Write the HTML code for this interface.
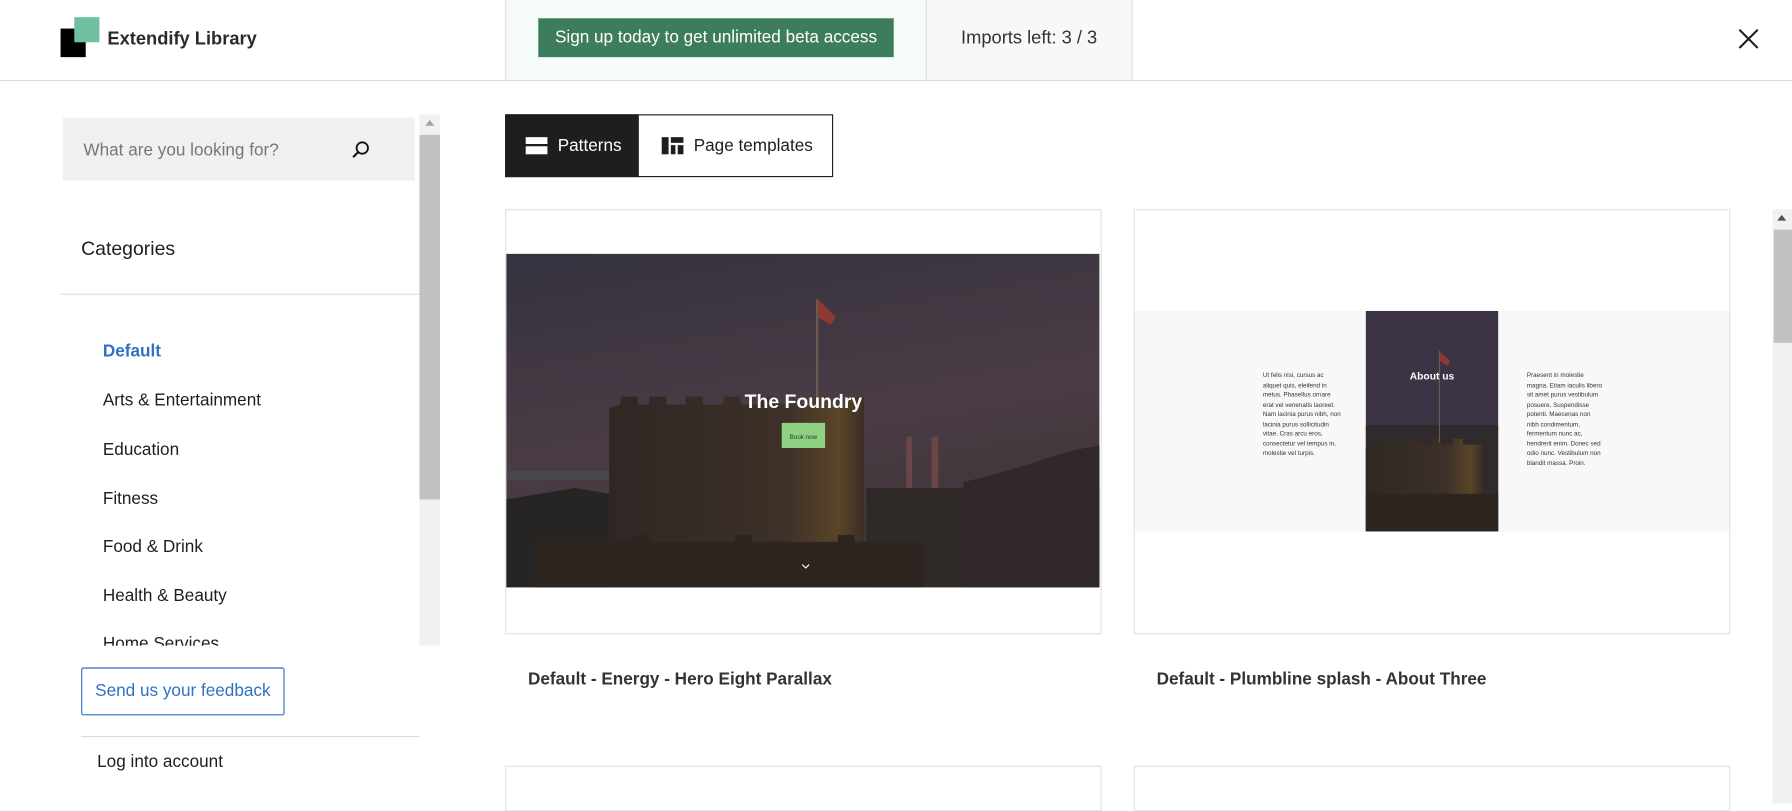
<!DOCTYPE html>
<html><head><meta charset="utf-8"><style>
*{box-sizing:border-box;margin:0;padding:0}
html,body{width:1792px;height:803px;overflow:hidden;background:#fff}
#w{position:absolute;left:0;top:0;width:1568px;height:703px;transform:scale(1.142857);transform-origin:0 0;font-family:"Liberation Sans",sans-serif;color:#1e1e1e}
.a{position:absolute}
.t{white-space:nowrap}
</style></head><body><div id="w">
<!-- header -->
<div class="a" style="left:0;top:0;width:1568px;height:71px;border-bottom:1px solid #dcdcdc"></div>
<div class="a" style="left:53px;top:25px;width:22px;height:25px;background:#000"></div>
<div class="a" style="left:65px;top:15px;width:22px;height:22px;background:#6fc1a0"></div>
<div class="a t" style="left:94px;top:26px;font-size:16px;font-weight:bold;color:#2a2a2a">Extendify Library</div>
<div class="a" style="left:442px;top:0;width:368px;height:70px;background:#f5fbf9;border-left:1px solid #dcdcdc"></div>
<div class="a t" style="left:471px;top:16px;width:311px;height:34px;background:#3d7d5d;color:#fff;font-size:15px;line-height:34px;text-align:center">Sign up today to get unlimited beta access</div>
<div class="a t" style="left:810px;top:0;width:181px;height:70px;background:#f8f8f8;border-left:1px solid #dcdcdc;border-right:1px solid #dcdcdc;font-size:16px;line-height:68px;text-align:center;color:#333">Imports left: 3 / 3</div>
<svg class="a" style="left:1520px;top:24px" width="20" height="20" viewBox="0 0 20 20"><path d="M2 2L18 18M18 2L2 18" stroke="#1e1e1e" stroke-width="1.8"/></svg>
<!-- sidebar -->
<div class="a" style="left:55px;top:103px;width:308px;height:55px;background:#f0f0f0"></div>
<div class="a t" style="left:73px;top:123px;font-size:15px;color:#777">What are you looking for?</div>
<svg class="a" style="left:307px;top:122px" width="18" height="18" viewBox="0 0 18 18"><circle cx="10" cy="7.5" r="5" fill="none" stroke="#111" stroke-width="1.6"/><path d="M6.5 11L2 15.5" stroke="#111" stroke-width="1.8"/></svg>
<div class="a" style="left:367px;top:100px;width:18px;height:465px;background:#f1f1f1"></div>
<div class="a" style="left:367px;top:118px;width:18px;height:319px;background:#c1c1c1"></div>
<div class="a" style="left:372px;top:105px;width:0;height:0;border-left:4px solid transparent;border-right:4px solid transparent;border-bottom:5px solid #a3a3a3"></div>
<div class="a t" style="left:71px;top:208px;font-size:17px">Categories</div>
<div class="a" style="left:53px;top:257px;width:314px;height:1px;background:#dcdcdc"></div>
<div class="a" style="left:53px;top:258px;width:314px;height:307px;overflow:hidden;font-size:15px;color:#1e1e1e">
<div class="a t" style="left:37px;top:41px;color:#3071c4;font-weight:bold">Default</div>
<div class="a t" style="left:37px;top:84px">Arts &amp; Entertainment</div>
<div class="a t" style="left:37px;top:127px">Education</div>
<div class="a t" style="left:37px;top:170px">Fitness</div>
<div class="a t" style="left:37px;top:212px">Food &amp; Drink</div>
<div class="a t" style="left:37px;top:255px">Health &amp; Beauty</div>
<div class="a t" style="left:37px;top:297px">Home Services</div>
</div>
<div class="a t" style="left:71px;top:584px;width:178px;height:42px;border:1px solid #3071c4;border-radius:2px;color:#3071c4;font-size:15px;line-height:40px;text-align:center">Send us your feedback</div>
<div class="a" style="left:71px;top:644px;width:296px;height:1px;background:#dcdcdc"></div>
<div class="a t" style="left:85px;top:658px;font-size:15px">Log into account</div>
<!-- tabs -->
<div class="a" style="left:442px;top:100px;width:287px;height:55px;border:1px solid #1e1e1e;background:#fff"></div>
<div class="a" style="left:442px;top:100px;width:117px;height:55px;background:#1e1e1e"></div>
<div class="a" style="left:460px;top:120px;width:19px;height:6px;background:#fff"></div>
<div class="a" style="left:460px;top:128px;width:19px;height:7px;background:#fff"></div>
<div class="a t" style="left:488px;top:119px;font-size:15px;color:#fff">Patterns</div>
<div class="a" style="left:579px;top:120px;width:6px;height:15px;background:#1e1e1e"></div>
<div class="a" style="left:587px;top:120px;width:11px;height:5px;background:#1e1e1e"></div>
<div class="a" style="left:587px;top:127px;width:4px;height:8px;background:#1e1e1e"></div>
<div class="a" style="left:593px;top:127px;width:5px;height:8px;background:#1e1e1e"></div>
<div class="a t" style="left:607px;top:119px;font-size:15px">Page templates</div>
<!-- card 1 -->
<div class="a" style="left:442px;top:183px;width:522px;height:372px;border:1px solid #e0e0e0"></div>
<svg class="a" style="left:443px;top:222px" width="519" height="292" viewBox="0 0 519 292" preserveAspectRatio="none">
<defs><linearGradient id="s" x1="0" y1="0" x2="0.3" y2="1"><stop offset="0" stop-color="#35323f"/><stop offset="0.6" stop-color="#4a3c45"/><stop offset="1" stop-color="#3e3538"/></linearGradient>
<linearGradient id="tw" x1="0" x2="1"><stop offset="0" stop-color="#2e2723"/><stop offset="0.7" stop-color="#3d3128"/><stop offset="0.9" stop-color="#5a4527"/><stop offset="1" stop-color="#3a2e25"/></linearGradient></defs>
<rect width="519" height="292" fill="url(#s)"/>
<path d="M0 190H90V198H0Z" fill="#4a4650"/>
<path d="M0 215L60 205L90 210V292H0Z" fill="#262524"/>
<path d="M350 160L355 160V220H350ZM372 160H378V220H372Z" fill="#6a4648"/>
<path d="M315 205H519V292H315Z" fill="#2f2a28"/>
<path d="M400 200Q440 190 470 180Q500 170 519 168V292H400Z" fill="#30282a"/>
<path d="M90 135L100 132V125H115V132H125V125H140V132H157V125H172V132H190V125H205V132H222V125H237V132H265V125H280V132H295V125H313V292H90Z" fill="url(#tw)"/>
<path d="M25 252H110V246H125V252H200V246H215V252H290V246H305V252H365V292H25Z" fill="#2c2520"/>
<path d="M271 40H273V135H271Z" fill="#6c5a50"/>
<path d="M273 40L288 55L284 62L273 56Z" fill="#8e3a33"/>
<text x="260" y="135" fill="#fff" font-family="Liberation Sans,sans-serif" font-size="17" font-weight="bold" text-anchor="middle">The Foundry</text>
<rect x="241" y="148" width="38" height="22" fill="#8fd183"/>
<text x="260" y="162" fill="#333" font-family="Liberation Sans,sans-serif" font-size="5.5" text-anchor="middle">Book now</text>
<path d="M259 272L262 275L265 272" stroke="#fff" stroke-width="1" fill="none"/>
</svg>
<div class="a t" style="left:462px;top:586px;font-size:15px;font-weight:bold;color:#333">Default - Energy - Hero Eight Parallax</div>
<!-- card 2 -->
<div class="a" style="left:992px;top:183px;width:522px;height:372px;border:1px solid #e0e0e0"></div>
<div class="a" style="left:993px;top:272px;width:520px;height:193px;background:#f8f8f8"></div>
<div class="a" style="left:1105px;top:325px;width:70px;font-size:5.5px;line-height:8.5px;color:#333">Ut felis nisi, cursus ac aliquet quis, eleifend in metus. Phasellus ornare erat vel venenatis laoreet. Nam lacinia purus nibh, non lacinia purus sollicitudin vitae. Cras arcu eros, consectetur vel tempus in, molestie vel turpis.</div>
<div class="a" style="left:1336px;top:325px;width:66px;font-size:5.5px;line-height:8.5px;color:#333">Praesent in molestie magna. Etiam iaculis libero sit amet purus vestibulum posuere. Suspendisse potenti. Maecenas non nibh condimentum, fermentum nunc ac, hendrerit enim. Donec sed odio nunc. Vestibulum non blandit massa. Proin.</div>
<svg class="a" style="left:1195px;top:272px" width="116" height="193" viewBox="0 0 116 193">
<rect width="116" height="193" fill="#3c3444"/>
<rect y="100" width="116" height="93" fill="#2f2a2c"/>
<path d="M0 120L6 117V112H15V117H22V112H30V117H38V112H47V117H58V112H66V117H76V112H85V117H102V193H0Z" fill="url(#tw)"/>
<path d="M0 160H116V193H0Z" fill="#2c2520"/>
<path d="M64 35H65V115H64Z" fill="#6c5a50"/>
<path d="M65 36L74 44L71 48L65 44Z" fill="#8e3a33"/>
<text x="58" y="60" fill="#fff" font-family="Liberation Sans,sans-serif" font-size="9" font-weight="bold" text-anchor="middle">About us</text>
</svg>
<div class="a t" style="left:1012px;top:586px;font-size:15px;font-weight:bold;color:#333">Default - Plumbline splash - About Three</div>
<!-- next row -->
<div class="a" style="left:442px;top:670px;width:522px;height:40px;border:1px solid #e0e0e0"></div>
<div class="a" style="left:992px;top:670px;width:522px;height:40px;border:1px solid #e0e0e0"></div>
<!-- right scrollbar -->
<div class="a" style="left:1551px;top:183px;width:17px;height:520px;background:#f1f1f1"></div>
<div class="a" style="left:1552px;top:201px;width:16px;height:99px;background:#c1c1c1"></div>
<div class="a" style="left:1555px;top:188px;width:0;height:0;border-left:4px solid transparent;border-right:4px solid transparent;border-bottom:5px solid #505050"></div>
</div></body></html>
